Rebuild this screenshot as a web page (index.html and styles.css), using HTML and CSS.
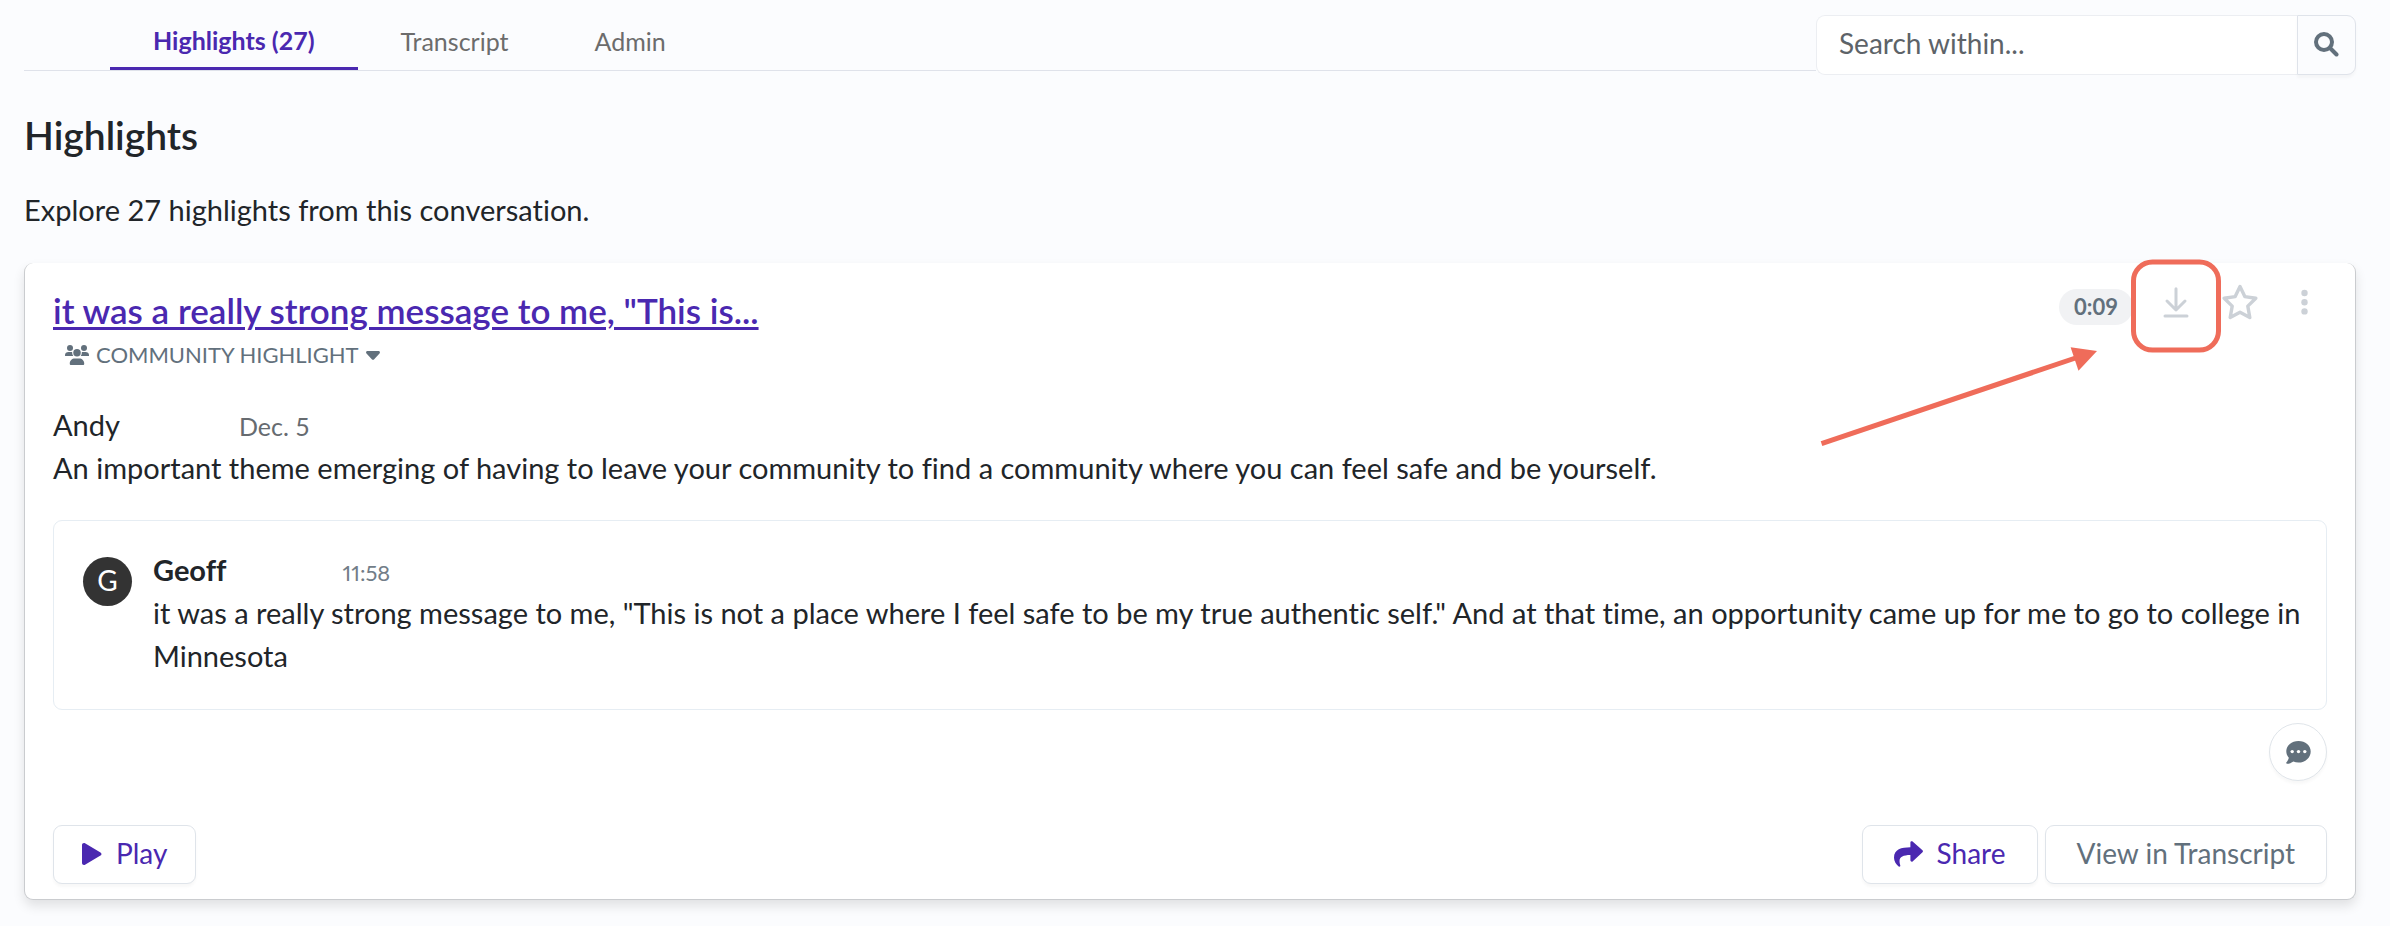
FILE: index.html
```html
<!DOCTYPE html>
<html lang="en">
<head>
<meta charset="utf-8">
<meta name="viewport" content="width=device-width, initial-scale=1">
<title>Highlights</title>
<link rel="stylesheet" href="styles.css">
</head>
<body>
<header class="topbar">
  <nav class="tabs" aria-label="Conversation sections">
    <a class="tab tab-active" href="#highlights" aria-current="page">Highlights (27)</a>
    <a class="tab" href="#transcript">Transcript</a>
    <a class="tab" href="#admin">Admin</a>
  </nav>
  <form class="search" role="search">
    <input class="search-input" type="text" placeholder="Search within..." aria-label="Search within">
    <button class="search-button" type="button" aria-label="Search">
      <svg width="25" height="25" viewBox="0 0 25 25" fill="none" stroke="currentColor" stroke-width="4" stroke-linecap="round" aria-hidden="true"><circle cx="10" cy="10" r="8"/><path d="M16 16l6.500 6.500"/></svg>
    </button>
  </form>
</header>

<main id="highlights">
  <h1 class="page-title">Highlights</h1>
  <p class="intro">Explore 27 highlights from this conversation.</p>

  <article class="card">
    <div class="card-head">
      <div class="card-titles">
        <h2 class="card-title"><a href="#highlight">it was a really strong message to me, "This is...</a></h2>
        <button class="kind" type="button">
          <svg width="24" height="20" viewBox="0 0 48 40" fill="currentColor" aria-hidden="true">
            <circle cx="10" cy="6" r="6"/><circle cx="38" cy="6" r="6"/><circle cx="24" cy="15.500" r="7.500"/>
            <path d="M0 20c0-4 3-6 7-6h5c1 0 2 .2 2.500.5-.4 3 .3 5.500 2 7.500H1.500A1.500 1.500 0 0 1 0 20zM48 20c0-4-3-6-7-6h-5c-1 0-2 .2-2.500.5.4 3-.3 5.500-2 7.500h15a1.500 1.500 0 0 0 1.500-2zM9.500 37.500C9.500 31 14 27 19.500 27h9c5.500 0 10 4 10 10.500 0 1.400-1 2.500-2.500 2.500H12c-1.500 0-2.500-1.100-2.500-2.500z"/>
          </svg>
          <span>COMMUNITY HIGHLIGHT</span>
          <svg width="14" height="9" viewBox="0 0 14 9" fill="currentColor" aria-hidden="true"><path d="M1.500 0h11c1.300 0 1.900 1.500 1 2.400L8.200 8.300c-.6.700-1.700.7-2.400 0L.5 2.400C-.4 1.500.2 0 1.500 0z"/></svg>
        </button>
      </div>
      <div class="actions">
        <span class="duration">0:09</span>
        <button class="icon-button" type="button" aria-label="Download">
          <svg width="26" height="31" viewBox="0 0 26 31" fill="none" stroke="currentColor" stroke-width="3" stroke-linecap="round" stroke-linejoin="round" aria-hidden="true"><path d="M13 1.800v21M4 14l9 9 9-9M2 29h22"/></svg>
        </button>
        <button class="icon-button" type="button" aria-label="Add to favorites">
          <svg width="36" height="38" viewBox="0 0 36 38" fill="none" stroke="currentColor" stroke-width="3.400" stroke-linejoin="round" aria-hidden="true"><path d="M18 3.500l4.800 10.100 11 1.600-8 7.900 2 11.400L18 29.200l-9.800 5.300 2-11.400-8-7.900 11-1.600z"/></svg>
        </button>
        <button class="icon-button" type="button" aria-label="More options">
          <svg width="7" height="27" viewBox="0 0 7 27" fill="currentColor" aria-hidden="true"><circle cx="3.500" cy="4" r="3.200"/><circle cx="3.500" cy="13.200" r="3.200"/><circle cx="3.500" cy="22.400" r="3.200"/></svg>
        </button>
      </div>
    </div>

    <div class="note">
      <div class="note-meta"><span class="note-author">Andy</span><span class="note-date">Dec. 5</span></div>
      <p class="note-text">An important theme emerging of having to leave your community to find a community where you can feel safe and be yourself.</p>
    </div>

    <section class="quote">
      <span class="avatar">G</span>
      <div class="quote-body">
        <div class="quote-meta"><strong class="speaker">Geoff</strong><span class="time">11:58</span></div>
        <p class="quote-text">it was a really strong message to me, "This is not a place where I feel safe to be my true authentic self." And at that time, an opportunity came up for me to go to college in Minnesota</p>
      </div>
    </section>

    <div class="comment-row">
      <button class="comment-button" type="button" aria-label="Comment">
        <svg width="25" height="23" viewBox="0 0 25 23" aria-hidden="true"><path fill="currentColor" d="M12.500 0C5.600 0 .3 4.500.3 10.300c0 2.500.9 4.700 2.500 6.500-.3 1.700-1.100 3.100-2.300 4.400-.6.700-.2 1.600.6 1.600 2.600 0 4.700-1 6.200-2.200 1.600.6 3.300 1 5.200 1 6.900 0 12.200-4.900 12.200-11.100S19.400 0 12.500 0z"/><g fill="#fff"><circle cx="6.200" cy="10.600" r="1.700"/><circle cx="12.500" cy="10.600" r="1.700"/><circle cx="18.800" cy="10.600" r="1.700"/></g></svg>
      </button>
    </div>

    <div class="card-foot">
      <button class="button button-primary" type="button">
        <svg width="20" height="22" viewBox="0 0 20 22" fill="currentColor" aria-hidden="true"><path d="M0 2C0 .5 1.600-.5 3 .3l15.500 9.100c1.300.7 1.300 2.500 0 3.200L3 21.700C1.600 22.500 0 21.500 0 20z"/></svg>
        <span>Play</span>
      </button>
      <div class="button-group">
        <button class="button button-primary" type="button">
          <svg width="29" height="26" viewBox="0 0 29 26" fill="currentColor" aria-hidden="true"><path d="M28.500 9.300 18.600.5c-.9-.8-2.200-.2-2.200 1v4.800C7.400 6.400 0 8.200 0 16.800c0 3.500 2.200 6.900 4.700 8.700.8.600 1.900-.1 1.600-1-2.500-8.200 1.200-10.300 10.100-10.500v5.300c0 1.200 1.400 1.800 2.200 1.100l9.900-9.100c.6-.5.6-1.500 0-2z"/></svg>
          <span>Share</span>
        </button>
        <button class="button button-muted" type="button">View in Transcript</button>
      </div>
    </div>

    <svg class="callout" width="420" height="200" viewBox="0 0 420 200" fill="none" aria-hidden="true">
      <rect x="318.500" y="9" width="85" height="88" rx="19" stroke="#ef6c5a" stroke-width="5"/>
      <path d="M6.500 190.700 262 104.500" stroke="#ef6c5a" stroke-width="5"/>
      <path d="M282 98 255.600 94.300 263.500 117.700z" fill="#ef6c5a"/>
    </svg>
  </article>
</main>
</body>
</html>
```
FILE: styles.css
```css
* { box-sizing: border-box; }

body {
  margin: 0;
  padding: 0 34px 24px 24px;
  background: #fbfcfe;
  color: #212529;
  font-family: "Lato", "Open Sans", sans-serif;
  font-size: 29px;
  line-height: 43px;
  font-variant-ligatures: none;
}

h1, h2, p { margin: 0; }

button, input { font: inherit; color: inherit; margin: 0; }

button { cursor: pointer; }

svg { display: block; flex: none; }

.topbar { display: flex; align-items: flex-start; }

.tabs {
  display: flex;
  flex: 1;
  height: 71px;
  padding-left: 86px;
  border-bottom: 1px solid #dfe2ea;
}

.tab {
  display: flex;
  align-items: center;
  padding: 12px 43px 0;
  color: #6c6c6c;
  font-size: 25px;
  line-height: 30px;
  text-decoration: none;
}

.tab-active {
  border-bottom: 3px solid #4a28b0;
  color: #4a28b0;
  font-weight: 700;
}

.search {
  display: flex;
  width: 540px;
  height: 60px;
  margin-top: 15px;
}

.search-input {
  flex: 1;
  min-width: 0;
  padding: 0 22px 4px;
  border: 1px solid #eceef2;
  border-right: 0;
  border-radius: 9px 0 0 9px;
  background: #fff;
  font-size: 28px;
}

.search-input::placeholder { color: #5d6368; opacity: 1; }

.search-button {
  display: flex;
  align-items: center;
  justify-content: center;
  width: 59px;
  padding: 0 0 2px;
  border: 1px solid #dfe3ea;
  border-radius: 0 9px 9px 0;
  background: #fbfcfe;
  color: #62707c;
  box-shadow: 0 3px 3px rgba(0, 0, 0, 0.03);
}

.page-title {
  margin-top: 36px;
  font-size: 39px;
  font-weight: 600;
  line-height: 48px;
}

.intro { margin-top: 29px; }

.card {
  position: relative;
  margin-top: 32px;
  padding: 26px 28px 15px;
  border: 1px solid #cacccf;
  border-top: 0;
  border-radius: 9px;
  background: #fff;
  box-shadow: 0 6px 12px rgba(0, 0, 0, 0.11);
}

.card-head { display: flex; justify-content: space-between; align-items: flex-start; }

.card-title {
  font-size: 35px;
  font-weight: 600;
  line-height: 42px;
}

.card-title a { color: #4a28b0; text-decoration-thickness: 3px; text-underline-offset: 3px; }

.kind {
  display: flex;
  align-items: center;
  gap: 7px;
  margin-top: 8px;
  padding: 0 12px;
  border: 0;
  background: none;
  color: #62707c;
  font-size: 22px;
  line-height: 32px;
}

.actions {
  display: flex;
  align-items: center;
  margin: -17px -9px 0 0;
}

.duration {
  margin: 10px 11px 0 0;
  padding: 0 15px;
  border-radius: 18px;
  background: #f1f2f4;
  color: #62707c;
  font-size: 22px;
  font-weight: 700;
  line-height: 36px;
}

.icon-button {
  display: flex;
  align-items: center;
  justify-content: center;
  width: 64px;
  height: 60px;
  padding: 0;
  border: 0;
  background: none;
  color: #ccd1d7;
}

.note { margin-top: 32px; }

.note-meta { display: flex; align-items: baseline; gap: 119px; }

.note-date { color: #666b70; font-size: 25px; line-height: 30px; }

.quote {
  display: flex;
  gap: 21px;
  margin-top: 31px;
  padding: 27px 12px 32px 29px;
  border: 1px solid #e6edf3;
  border-radius: 9px;
}

.avatar {
  flex: none;
  width: 49px;
  height: 49px;
  margin-top: 9px;
  border-radius: 50%;
  background: #333;
  color: #fff;
  font-size: 28px;
  line-height: 47px;
  text-align: center;
}

.quote-meta { display: flex; align-items: baseline; gap: 116px; }

.time {
  color: #727d88;
  font-size: 22px;
  font-variant-numeric: proportional-nums;
  line-height: 30px;
}

.comment-row {
  display: flex;
  justify-content: flex-end;
  margin-top: 13px;
}

.comment-button {
  display: flex;
  align-items: center;
  justify-content: center;
  width: 58px;
  height: 58px;
  padding: 0;
  border: 1px solid #e0e5ea;
  border-radius: 50%;
  background: #fff;
  color: #62707c;
  box-shadow: 0 3px 3px rgba(0, 0, 0, 0.03);
}

.card-foot {
  display: flex;
  justify-content: space-between;
  margin-top: 44px;
}

.button-group { display: flex; gap: 7px; }

.button {
  display: flex;
  align-items: center;
  gap: 14px;
  height: 59px;
  padding: 0 28px 2px;
  border: 1px solid #dfe4ea;
  border-radius: 9px;
  background: #fff;
  font-size: 28px;
  box-shadow: 0 3px 3px rgba(0, 0, 0, 0.03);
}

.button-group .button { padding: 0 31px 2px; }

.button-primary { color: #4a28b0; }

.button-muted { color: #62707c; }

.callout {
  position: absolute;
  top: -10px;
  right: 120px;
  pointer-events: none;
}
```
